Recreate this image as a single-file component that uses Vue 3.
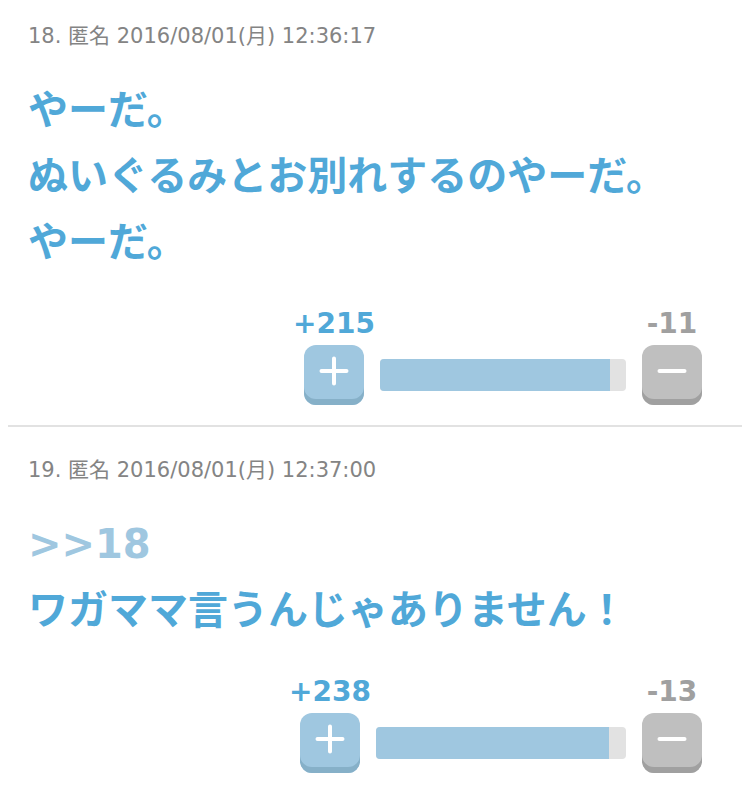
<template>
  <main class="thread">
    <article v-for="post in posts" :key="post.id" class="post">
      <header class="post__header">
        {{ post.id }}. {{ post.name }} <time>{{ post.date }}</time>
      </header>

      <div class="post__body">
        <a v-if="post.replyTo" class="post__anchor" :href="'#comment' + post.replyTo">&gt;&gt;{{ post.replyTo }}</a>
        <p v-for="(line, i) in post.lines" :key="i" class="post__line">{{ line }}</p>
      </div>

      <!-- Votes -->
      <footer class="votes">
        <div class="votes__col votes__col--plus">
          <span class="votes__count">+{{ post.plus }}</span>
          <button class="votes__btn" type="button" aria-label="プラス">
            <svg width="30" height="30" viewBox="0 0 30 30" fill="none" stroke="#fff" stroke-width="4" stroke-linecap="round">
              <path d="M2.5 15H27.5M15 2.5V27.5"/>
            </svg>
          </button>
        </div>
        <div class="votes__bar" :style="{ width: post.bar + 'px' }">
          <div class="votes__fill" :style="{ width: post.rate + '%' }"></div>
        </div>
        <div class="votes__col votes__col--minus">
          <span class="votes__count">-{{ post.minus }}</span>
          <button class="votes__btn" type="button" aria-label="マイナス">
            <svg width="30" height="30" viewBox="0 0 30 30" fill="none" stroke="#fff" stroke-width="4" stroke-linecap="round">
              <path d="M2.5 15H27.5"/>
            </svg>
          </button>
        </div>
      </footer>
    </article>
  </main>
</template>

<script setup>
const posts = [
  {
    id: 18,
    name: '匿名',
    date: '2016/08/01(月) 12:36:17',
    lines: ['やーだ。', 'ぬいぐるみとお別れするのやーだ。', 'やーだ。'],
    plus: 215,
    minus: 11,
    bar: 246,
    rate: 93.5
  },
  {
    id: 19,
    name: '匿名',
    date: '2016/08/01(月) 12:37:00',
    replyTo: 18,
    lines: ['ワガママ言うんじゃありません！'],
    plus: 238,
    minus: 13,
    bar: 250,
    rate: 93.2
  }
]
</script>

<style>
body {
  margin: 0;
  background: #fff;
}
</style>

<style scoped>
.thread {
  padding: 0 8px;
  font-family: Verdana, 'DejaVu Sans', 'Noto Sans CJK JP', sans-serif;
}

.post {
  padding: 28px 20px 20px;
}
.post:first-child {
  padding-top: 21px;
}
.post + .post {
  border-top: 2px solid #e2e2e2;
}
.post__header {
  font-size: 21px;
  line-height: 30px;
  color: #848484;
}

.post__body {
  margin: 26px 0 28px;
  font-size: 40px;
  font-weight: 700;
  line-height: 66px;
  color: #50a8d8;
}
.post__anchor {
  display: block;
  color: #9fc7e0;
  text-decoration: none;
}
.post__line {
  margin: 0;
}

.votes {
  display: flex;
  justify-content: flex-end;
  align-items: flex-end;
  gap: 16px;
  padding-right: 20px;
}
.votes__col {
  display: flex;
  flex-direction: column;
  align-items: center;
  width: 60px;
}
.votes__col--plus {
  color: #50a8d8;
}
.votes__col--minus {
  color: #a0a0a0;
}
.votes__count {
  font-size: 28px;
  font-weight: 700;
  line-height: 42px;
  white-space: nowrap;
}
.votes__btn {
  display: flex;
  align-items: center;
  justify-content: center;
  width: 60px;
  height: 60px;
  padding: 0 0 8px;
  border: none;
  border-radius: 12px;
  background: #9fc7e0;
  box-shadow: inset 0 -6px #86b0c8;
  cursor: pointer;
}
.votes__col--minus .votes__btn {
  background: #bfbfbf;
  box-shadow: inset 0 -6px #a0a0a0;
}

.votes__bar {
  height: 32px;
  margin-bottom: 14px;
  border-radius: 4px;
  background: #e2e2e2;
  overflow: hidden;
}
.votes__fill {
  height: 100%;
  background: #9fc7e0;
}
</style>
